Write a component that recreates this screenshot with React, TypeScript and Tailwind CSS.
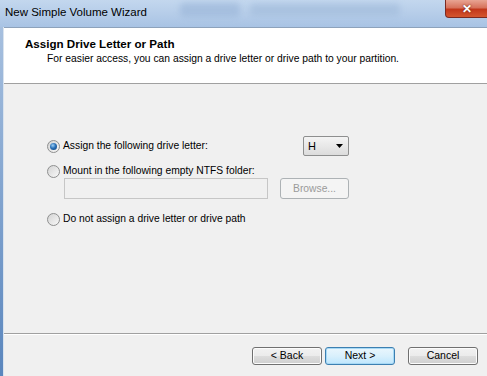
import React from "react";

function Radio({ checked }: { checked?: boolean }) {
  return (
    <div className="w-[13px] h-[13px] rounded-full border border-[#8e8f8f] bg-gradient-to-br from-[#d4d4d4] to-[#f8f8f8] flex items-center justify-center shrink-0">
      {checked && (
        <div className="w-[7px] h-[7px] rounded-full bg-[radial-gradient(circle_at_40%_35%,#9fd0f5_0%,#2a71b8_45%,#0d3c74_100%)]" />
      )}
    </div>
  );
}

function Button({ label, focused }: { label: string; focused?: boolean }) {
  return (
    <div
      className={
        "w-[70px] h-[18px] rounded-[3px] border flex items-center justify-center text-[10.5px] text-black " +
        (focused
          ? "border-[#3c7fb1] bg-gradient-to-b from-[#eaf6fd] via-[#d9f0fc] to-[#bee6fd] shadow-[inset_0_0_0_1px_#a7d9f5]"
          : "border-[#707070] bg-[linear-gradient(to_bottom,#f2f2f2_0%,#ebebeb_50%,#dddddd_51%,#cfcfcf_100%)] shadow-[inset_0_0_0_1px_#fcfcfc]")
      }
    >
      {label}
    </div>
  );
}

export default function App() {
  return (
    <div
      className="w-[487px] h-[376px] flex flex-col overflow-hidden bg-[#f0f0f0] text-black"
      style={{ fontFamily: '"Liberation Sans", Arial, sans-serif' }}
    >
      {/* Title bar */}
      <div className="h-[27px] shrink-0 flex items-start justify-between bg-gradient-to-b from-[#c3d7ee] via-[#b6cde9] to-[#a8c3e4] relative">
        <div className="pl-[5px] pt-[5px] text-[11.5px] text-black leading-[15px]">
          New Simple Volume Wizard
        </div>
        <div className="absolute left-[180px] top-[3px] w-[60px] h-[14px] rounded bg-[#9db8da] blur-[3px] opacity-70" />
        <div className="absolute left-[250px] top-[4px] w-[150px] h-[12px] rounded bg-[#a3bddc] blur-[3px] opacity-70" />
        <div className="w-[43px] h-[18px] mr-[-1px] rounded-bl-[4px] border border-t-0 border-[#7a2a22] bg-[linear-gradient(to_bottom,#e8a493_0%,#d7725c_45%,#c2371b_55%,#d4562f_100%)] flex items-center justify-center relative z-10">
          <span className="text-white text-[12px] font-bold leading-none" style={{ textShadow: "0 0 2px #5a1a10" }}>
            ✕
          </span>
        </div>
      </div>

      {/* Body */}
      <div className="flex-1 flex">
        <div className="w-[3px] bg-gradient-to-b from-[#a7c0df] to-[#5a86bd]" />
        <div className="w-[1px] bg-[#d9e3ee]" />
        <div className="flex-1 flex flex-col border-t border-[#8da2bb]">
          {/* Header */}
          <div className="h-[56px] bg-white border-b border-[#a0a0a0] pl-[21px] pt-[9px]">
            <div className="text-[11.6px] font-bold leading-[14px]">Assign Drive Letter or Path</div>
            <div className="text-[10.3px] leading-[14px] pl-[22px] pt-[1px]">
              For easier access, you can assign a drive letter or drive path to your partition.
            </div>
          </div>

          {/* Content */}
          <div className="flex-1 pl-[43px] pt-[52px]">
            <div className="flex items-center h-[20px] w-[302px]">
              <Radio checked />
              <span className="ml-[3px] text-[10.3px] flex-1">Assign the following drive letter:</span>
              <div className="w-[46px] h-[20px] rounded-[2px] border border-[#8e8f8f] bg-gradient-to-b from-[#f4f4f4] to-[#dcdcdc] flex items-center justify-between pl-[4px] pr-[5px]">
                <span className="text-[11px]">H</span>
                <svg width="7" height="4" viewBox="0 0 7 4">
                  <path d="M0 0 L7 0 L3.5 4 Z" fill="#000" />
                </svg>
              </div>
            </div>
            <div className="flex items-center h-[14px] mt-[8px]">
              <Radio />
              <span className="ml-[3px] text-[10.3px]">Mount in the following empty NTFS folder:</span>
            </div>
            <div className="flex items-center ml-[17px] mt-[0px] gap-[12px]">
              <div className="w-[204px] h-[21px] border border-[#c6c6c6] bg-[#f0f0f0]" />
              <div className="w-[69px] h-[21px] rounded-[3px] border border-[#adb2b5] bg-[#f4f4f4] flex items-center justify-center text-[10.3px] text-[#9a9a9a]">
                Browse...
              </div>
            </div>
            <div className="flex items-center h-[14px] mt-[13px]">
              <Radio />
              <span className="ml-[3px] text-[10.3px]">Do not assign a drive letter or drive path</span>
            </div>
          </div>

          {/* Footer */}
          <div className="h-[43px] border-t border-[#a0a0a0] shadow-[inset_0_1px_0_#ffffff] flex items-start justify-end pt-[13px] pr-[9px]">
            <Button label="< Back" />
            <div className="ml-[3px]">
              <Button label="Next >" focused />
            </div>
            <div className="ml-[13px]">
              <Button label="Cancel" />
            </div>
          </div>
        </div>
      </div>
    </div>
  );
}
